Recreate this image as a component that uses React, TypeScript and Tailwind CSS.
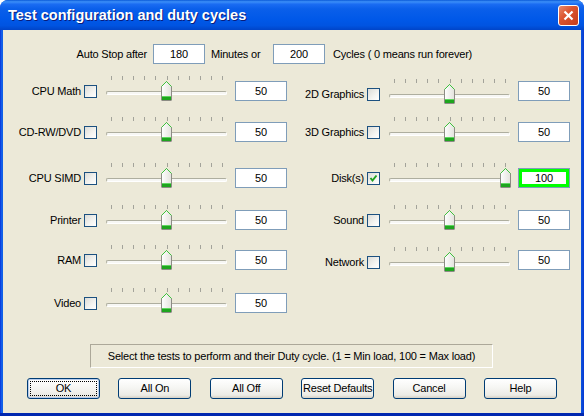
import React from 'react';

type Test = { label: string; value: number; checked?: boolean; focus?: boolean; shift?: string };

const ROWS: { h: string; left: Test; right?: Test }[] = [
  { h: 'h-[41px]', left: { label: 'CPU Math', value: 50 }, right: { label: '2D Graphics', value: 50, shift: 'mt-[3px]' } },
  { h: 'h-[46px]', left: { label: 'CD-RW/DVD', value: 50 }, right: { label: '3D Graphics', value: 50 } },
  { h: 'h-[42px]', left: { label: 'CPU SIMD', value: 50 }, right: { label: 'Disk(s)', value: 100, checked: true, focus: true } },
  { h: 'h-[40px]', left: { label: 'Printer', value: 50 }, right: { label: 'Sound', value: 50 } },
  { h: 'h-[43px]', left: { label: 'RAM', value: 50 }, right: { label: 'Network', value: 50, shift: 'mt-[2px]' } },
  { h: 'h-[25px]', left: { label: 'Video', value: 50 } },
];

const BUTTONS = ['OK', 'All On', 'All Off', 'Reset Defaults', 'Cancel', 'Help'];

function CheckBox({ checked }: { checked?: boolean }) {
  return (
    <div className="w-[13px] h-[13px] border border-[#1c5180] bg-[linear-gradient(135deg,#dcdcd7_0%,#f4f4f1_60%,#ffffff_100%)] shrink-0">
      {checked && (
        <svg width="11" height="11" viewBox="0 0 11 11">
          <path d="M2.5 5 L4.5 7.5 L8.5 2.5" fill="none" stroke="#21a121" strokeWidth="2" />
        </svg>
      )}
    </div>
  );
}

function Thumb() {
  return (
    <svg width="11" height="20" viewBox="0 0 11 20">
      <defs>
        <linearGradient id="tg" x1="0" y1="0" x2="1" y2="0">
          <stop offset="0" stopColor="#ffffff" />
          <stop offset="1" stopColor="#e3e2dc" />
        </linearGradient>
      </defs>
      <path d="M0.5 19 L0.5 5.5 L5.5 0.5 L10.5 5.5 L10.5 19 Q10.5 19.5 10 19.5 L1 19.5 Q0.5 19.5 0.5 19 Z" fill="url(#tg)" stroke="#8c8c84" />
      <path d="M0.5 5.5 L5.5 0.5 L10.5 5.5" fill="none" stroke="#3cc23c" />
      <rect x="1" y="15" width="9" height="4" fill="#1ea51e" />
      <rect x="1" y="15" width="9" height="1" fill="#5fd65f" />
    </svg>
  );
}

function Slider({ value }: { value: number }) {
  const ticks = Array.from({ length: 11 }, (_, i) => i);
  const center = 5 + (value / 100) * 111;
  return (
    <div className="relative w-[121px] h-[25px] shrink-0">
      {ticks.map(i => (
        <div key={i} className="absolute top-0 w-px h-[4px] bg-[#a3a39a]" style={{ left: Math.round(5 + i * 11.1) }} />
      ))}
      <div className="absolute left-0 right-0 top-[15px] h-[4px] rounded-[2px] border border-[#aeae9f] border-b-white border-r-white bg-[#f7f7f4]" />
      <div className="absolute top-[5px]" style={{ left: Math.round(center - 5.5) }}>
        <Thumb />
      </div>
    </div>
  );
}

function Item({ t }: { t: Test }) {
  return (
    <div className="flex items-start w-[276px]">
      <div className={'flex items-start ' + (t.shift ?? '')}>
        <div className="w-[70px] mt-[5px] h-[20px] leading-[20px] text-right whitespace-nowrap">{t.label}</div>
        <div className="ml-[3px] mt-[9px]">
          <CheckBox checked={t.checked} />
        </div>
        <div className="ml-[9px]">
          <Slider value={t.value} />
        </div>
      </div>
      <div
        className={
          'ml-[8px] mt-[5px] w-[52px] h-[20px] border border-[#7f9db9] bg-white text-center leading-[18px] ' +
          (t.focus ? 'shadow-[inset_0_0_0_3px_#00ff00]' : '')
        }
      >
        {t.value}
      </div>
    </div>
  );
}

function XpButton({ label, def }: { label: string; def?: boolean }) {
  return (
    <div
      className={
        'relative w-[73px] h-[21px] rounded-[3px] border border-[#003c74] bg-[linear-gradient(to_bottom,#ffffff_0%,#f6f6f3_45%,#ecebe5_85%,#d6d0c5_100%)] flex items-center justify-center whitespace-nowrap ' +
        (def ? 'shadow-[inset_0_0_0_1px_#b8cdef]' : '')
      }
    >
      {def && <div className="absolute inset-[2px] border border-dotted border-black" />}
      {label}
    </div>
  );
}

export default function App() {
  return (
    <div className="w-[584px] h-[416px] bg-white font-['Liberation_Sans',Arial,sans-serif] text-[11px] tracking-[-0.2px] text-black">
      <div className="w-full h-full flex flex-col rounded-t-[8px] overflow-hidden bg-[linear-gradient(to_right,#0831d9_0px,#166aee_2px,#0a55e0_3px,#0a55e0_581px,#0838d0_584px)]">
        {/* title bar */}
        <div className="h-[30px] shrink-0 flex items-start bg-[linear-gradient(to_bottom,#0a5ad8_0%,#3b8ff8_6%,#1a6cf2_14%,#0a5fea_30%,#0058e8_65%,#0054e1_85%,#0044c8_100%)]">
          <div className="ml-[8px] mt-[6px] text-white font-bold text-[14.5px] tracking-normal leading-[18px] [text-shadow:1px_1px_0_#0a1c7a]">
            Test configuration and duty cycles
          </div>
          <div className="ml-auto mr-[5px] mt-[5px] w-[21px] h-[21px] rounded-[3px] border border-white bg-[linear-gradient(135deg,#e88a6c_0%,#dc5530_40%,#c53d1c_100%)] flex items-center justify-center">
            <svg width="11" height="11" viewBox="0 0 11 11">
              <path d="M1.5 1.5 L9.5 9.5 M9.5 1.5 L1.5 9.5" stroke="white" strokeWidth="2.2" />
            </svg>
          </div>
        </div>
        {/* client */}
        <div className="flex-1 mx-[3px] bg-[#ece9d8] flex flex-col pl-[8px] pt-[14px]">
          <div className="flex items-center h-[20px]">
            <div className="w-[136px] text-right whitespace-nowrap">Auto Stop after</div>
            <div className="ml-[6px] w-[52px] h-[20px] border border-[#7f9db9] bg-white text-center leading-[18px]">180</div>
            <div className="ml-[6px] w-[62px] whitespace-nowrap">Minutes or</div>
            <div className="w-[52px] h-[20px] border border-[#7f9db9] bg-white text-center leading-[18px]">200</div>
            <div className="ml-[8px] whitespace-nowrap">Cycles ( 0 means run forever)</div>
          </div>
          <div className="mt-[12px] flex flex-col">
            {ROWS.map((r, i) => (
              <div key={i} className={'flex ' + r.h}>
                <Item t={r.left} />
                {r.right && (
                  <div className="ml-[7px]">
                    <Item t={r.right} />
                  </div>
                )}
              </div>
            ))}
          </div>
          <div className="mt-[31px] ml-[79px] w-[403px] h-[24px] border border-[#aca899] border-b-white border-r-white flex items-center justify-center whitespace-nowrap">
            Select the tests to perform and their Duty cycle. (1 = Min load, 100 = Max load)
          </div>
          <div className="mt-[10px] ml-[16px] flex gap-[18.4px]">
            {BUTTONS.map((b, i) => (
              <XpButton key={b} label={b} def={i === 0} />
            ))}
          </div>
        </div>
        <div className="h-[3px] shrink-0 bg-[#0027b0]" />
      </div>
    </div>
  );
}
